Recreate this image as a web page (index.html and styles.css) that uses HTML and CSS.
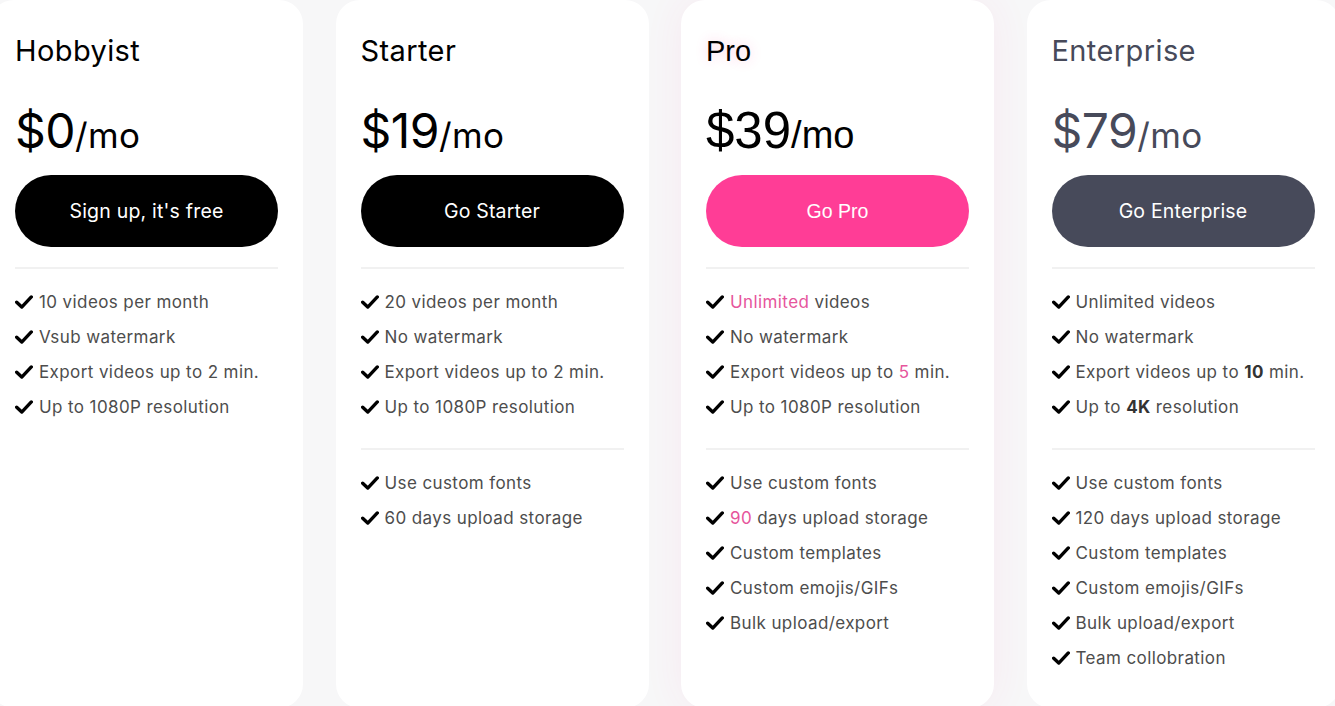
FILE: index.html
```html
<!DOCTYPE html>
<html>
<head>
<meta charset="utf-8">
<link rel="stylesheet" href="styles.css">
</head>
<body>
<div class="plans">
  <div class="card">
    <h2 class="title">Hobbyist</h2>
    <div class="price"><span class="amt">$0</span><span class="per">/mo</span></div>
    <a class="btn btn-black">Sign up, it's free</a>
    <hr class="rule">
    <ul class="feats">
      <li><svg class="chk" viewBox="0 0 16 12"><path d="M1.5 6.2 L6 10.5 L14.5 1.5"/></svg>10 videos per month</li>
      <li><svg class="chk" viewBox="0 0 16 12"><path d="M1.5 6.2 L6 10.5 L14.5 1.5"/></svg>Vsub watermark</li>
      <li><svg class="chk" viewBox="0 0 16 12"><path d="M1.5 6.2 L6 10.5 L14.5 1.5"/></svg>Export videos up to 2 min.</li>
      <li><svg class="chk" viewBox="0 0 16 12"><path d="M1.5 6.2 L6 10.5 L14.5 1.5"/></svg>Up to 1080P resolution</li>
    </ul>
  </div>
  <div class="card">
    <h2 class="title">Starter</h2>
    <div class="price"><span class="amt">$19</span><span class="per">/mo</span></div>
    <a class="btn btn-black">Go Starter</a>
    <hr class="rule">
    <ul class="feats">
      <li><svg class="chk" viewBox="0 0 16 12"><path d="M1.5 6.2 L6 10.5 L14.5 1.5"/></svg>20 videos per month</li>
      <li><svg class="chk" viewBox="0 0 16 12"><path d="M1.5 6.2 L6 10.5 L14.5 1.5"/></svg>No watermark</li>
      <li><svg class="chk" viewBox="0 0 16 12"><path d="M1.5 6.2 L6 10.5 L14.5 1.5"/></svg>Export videos up to 2 min.</li>
      <li><svg class="chk" viewBox="0 0 16 12"><path d="M1.5 6.2 L6 10.5 L14.5 1.5"/></svg>Up to 1080P resolution</li>
    </ul>
    <hr class="rule rule2">
    <ul class="feats">
      <li><svg class="chk" viewBox="0 0 16 12"><path d="M1.5 6.2 L6 10.5 L14.5 1.5"/></svg>Use custom fonts</li>
      <li><svg class="chk" viewBox="0 0 16 12"><path d="M1.5 6.2 L6 10.5 L14.5 1.5"/></svg>60 days upload storage</li>
    </ul>
  </div>
  <div class="card card-pro">
    <h2 class="title">Pro</h2>
    <div class="price"><span class="amt">$39</span><span class="per">/mo</span></div>
    <a class="btn btn-pink">Go Pro</a>
    <hr class="rule">
    <ul class="feats">
      <li><svg class="chk" viewBox="0 0 16 12"><path d="M1.5 6.2 L6 10.5 L14.5 1.5"/></svg><span class="hl">Unlimited</span>&nbsp;videos</li>
      <li><svg class="chk" viewBox="0 0 16 12"><path d="M1.5 6.2 L6 10.5 L14.5 1.5"/></svg>No watermark</li>
      <li><svg class="chk" viewBox="0 0 16 12"><path d="M1.5 6.2 L6 10.5 L14.5 1.5"/></svg>Export videos up to&nbsp;<span class="hl">5</span>&nbsp;min.</li>
      <li><svg class="chk" viewBox="0 0 16 12"><path d="M1.5 6.2 L6 10.5 L14.5 1.5"/></svg>Up to 1080P resolution</li>
    </ul>
    <hr class="rule rule2">
    <ul class="feats">
      <li><svg class="chk" viewBox="0 0 16 12"><path d="M1.5 6.2 L6 10.5 L14.5 1.5"/></svg>Use custom fonts</li>
      <li><svg class="chk" viewBox="0 0 16 12"><path d="M1.5 6.2 L6 10.5 L14.5 1.5"/></svg><span class="hl">90</span>&nbsp;days upload storage</li>
      <li><svg class="chk" viewBox="0 0 16 12"><path d="M1.5 6.2 L6 10.5 L14.5 1.5"/></svg>Custom templates</li>
      <li><svg class="chk" viewBox="0 0 16 12"><path d="M1.5 6.2 L6 10.5 L14.5 1.5"/></svg>Custom emojis/GIFs</li>
      <li><svg class="chk" viewBox="0 0 16 12"><path d="M1.5 6.2 L6 10.5 L14.5 1.5"/></svg>Bulk upload/export</li>
    </ul>
  </div>
  <div class="card card-ent">
    <h2 class="title">Enterprise</h2>
    <div class="price"><span class="amt">$79</span><span class="per">/mo</span></div>
    <a class="btn btn-slate">Go Enterprise</a>
    <hr class="rule">
    <ul class="feats">
      <li><svg class="chk" viewBox="0 0 16 12"><path d="M1.5 6.2 L6 10.5 L14.5 1.5"/></svg>Unlimited videos</li>
      <li><svg class="chk" viewBox="0 0 16 12"><path d="M1.5 6.2 L6 10.5 L14.5 1.5"/></svg>No watermark</li>
      <li><svg class="chk" viewBox="0 0 16 12"><path d="M1.5 6.2 L6 10.5 L14.5 1.5"/></svg>Export videos up to&nbsp;<b>10</b>&nbsp;min.</li>
      <li><svg class="chk" viewBox="0 0 16 12"><path d="M1.5 6.2 L6 10.5 L14.5 1.5"/></svg>Up to&nbsp;<b>4K</b>&nbsp;resolution</li>
    </ul>
    <hr class="rule rule2">
    <ul class="feats">
      <li><svg class="chk" viewBox="0 0 16 12"><path d="M1.5 6.2 L6 10.5 L14.5 1.5"/></svg>Use custom fonts</li>
      <li><svg class="chk" viewBox="0 0 16 12"><path d="M1.5 6.2 L6 10.5 L14.5 1.5"/></svg>120 days upload storage</li>
      <li><svg class="chk" viewBox="0 0 16 12"><path d="M1.5 6.2 L6 10.5 L14.5 1.5"/></svg>Custom templates</li>
      <li><svg class="chk" viewBox="0 0 16 12"><path d="M1.5 6.2 L6 10.5 L14.5 1.5"/></svg>Custom emojis/GIFs</li>
      <li><svg class="chk" viewBox="0 0 16 12"><path d="M1.5 6.2 L6 10.5 L14.5 1.5"/></svg>Bulk upload/export</li>
      <li><svg class="chk" viewBox="0 0 16 12"><path d="M1.5 6.2 L6 10.5 L14.5 1.5"/></svg>Team collobration</li>
    </ul>
  </div>
</div>
</body>
</html>
```
FILE: styles.css
```css
* { box-sizing: border-box; }
html, body {
  margin: 0;
  padding: 0;
  height: 706px;
  overflow: hidden;
  background: #f7f7f8;
  font-family: "Inter", "Noto Sans", sans-serif;
}
.plans {
  display: flex;
  gap: 32.5px;
  margin-left: -10px;
  height: 708px;
}
.card {
  flex: 0 0 313px;
  background: #fff;
  border-radius: 24px;
  padding: 31px 25px 0;
  display: flex;
  flex-direction: column;
}
.card-pro {
  box-shadow: 0 0 40px rgba(255, 61, 150, 0.07);
}
.title {
  margin: 0;
  font-size: 29px;
  line-height: 40px;
  font-weight: 400;
  color: #000;
  letter-spacing: 0.4px;
}
.price {
  margin-top: 34px;
  height: 52px;
  line-height: 52px;
  color: #000;
  display: flex;
  align-items: baseline;
}
.amt {
  font-size: 48px;
  letter-spacing: -0.5px;
}
.per {
  font-size: 35px;
  letter-spacing: 0.3px;
}
.btn {
  margin-top: 18px;
  display: flex;
  align-items: center;
  justify-content: center;
  height: 72px;
  border-radius: 36px;
  color: #fff;
  font-size: 19.5px;
  font-weight: 400;
  letter-spacing: 0.2px;
}
.btn-black { background: #000; }
.btn-pink { background: #ff3d96; }
.btn-slate { background: #474a5a; }
.rule {
  margin: 20px 0 15px;
  border: 0;
  border-top: 2px solid #f1f1f1;
}
.rule2 { margin-top: 24px; }
.feats {
  list-style: none;
  margin: 0;
  padding: 0;
}
.feats li {
  display: flex;
  align-items: center;
  height: 35px;
  font-size: 17px;
  color: #4d4d4d;
  letter-spacing: 0.4px;
}
.feats b {
  font-weight: 700;
  color: #333;
}
.chk {
  width: 18px;
  height: 14px;
  margin-right: 6px;
  flex: 0 0 auto;
}
.chk path {
  fill: none;
  stroke: #000;
  stroke-width: 3;
  stroke-linecap: round;
  stroke-linejoin: round;
}
.hl { color: #e6559c; }
.card-pro .title,
.card-pro .price,
.card-pro .btn {
  font-family: "Liberation Sans", Arial, sans-serif;
  letter-spacing: 0;
}
.card-pro .title {
  text-shadow: 0 0 12px rgba(255, 61, 150, 0.25);
}
.card-pro .amt { font-size: 51px; letter-spacing: 0; }
.card-pro .per { font-size: 38px; letter-spacing: 0; }
.card-ent .title,
.card-ent .price { color: #474a5a; }
```
